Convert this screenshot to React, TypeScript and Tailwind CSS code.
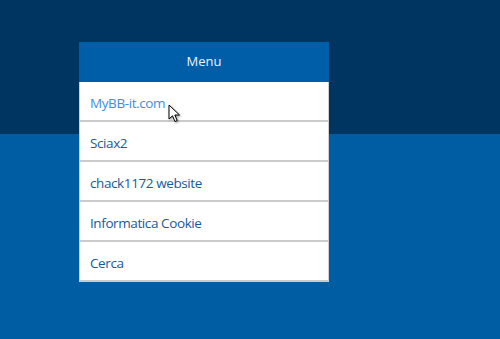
const items = [
  { label: 'MyBB-it.com', hover: true },
  { label: 'Sciax2' },
  { label: 'chack1172 website' },
  { label: 'Informatica Cookie' },
  { label: 'Cerca' },
]

function Cursor() {
  return (
    <svg width="14" height="20" viewBox="0 0 14 20" className="absolute left-[168px] top-[104px] drop-shadow-[1px_1px_1px_rgba(0,0,0,0.4)]">
      <path d="M1 1 L1 15 L4.5 11.8 L7 17.5 L9.2 16.5 L6.8 11 L11.5 11 Z" fill="#fff" stroke="#000" strokeWidth="1" strokeLinejoin="round" />
    </svg>
  )
}

export default function App() {
  return (
    <div className="relative w-[500px] h-[339px] overflow-hidden bg-[#005ca3] font-['Open_Sans',sans-serif]">
      <div className="h-[134px] bg-[#003562]" />
      <div className="absolute left-[79px] top-[42px] w-[250px]">
        <div className="h-10 bg-[#005ea8] flex items-center justify-center text-[13px] text-[#eaf4ff]">
          Menu
        </div>
        <ul className="bg-white border-x border-[#cfcfcf]">
          {items.map((item) => (
            <li
              key={item.label}
              className={`h-10 flex items-center pl-[10px] pt-1 text-[13.5px] tracking-[-0.4px] border-b-2 border-[#cbcbcb] ${item.hover ? 'text-[#3b8fe6]' : 'text-[#17599a]'}`}
            >
              {item.label}
            </li>
          ))}
        </ul>
      </div>
      <Cursor />
    </div>
  )
}
